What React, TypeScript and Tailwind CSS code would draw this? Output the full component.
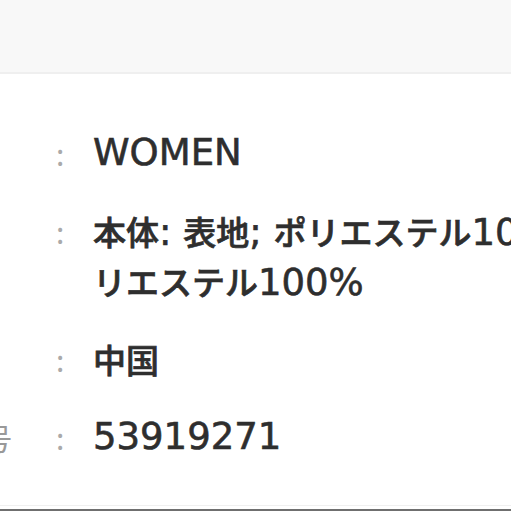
import React from 'react';

const rows: { label: string; lines: string[] }[] = [
  { label: '性別', lines: ['WOMEN'] },
  { label: '素材', lines: ['本体: 表地; ポリエステル100%, 裏地; ポ', 'リエステル100%'] },
  { label: '原産国', lines: ['中国'] },
  { label: '商品番号', lines: ['53919271'] },
];

// Latin text runs wider than the CJK glyphs in the original, so split them
const Mixed: React.FC<{ text: string }> = ({ text }) => {
  const parts = text.split(/([\u3000-\u30ff\u4e00-\u9fff\uff00-\uffef]+)/).filter(Boolean);
  return (
    <>
      {parts.map((p, i) =>
        /[\u3000-\u30ff\u4e00-\u9fff\uff00-\uffef]/.test(p) ? (
          <span key={i} className="text-[33px] font-['Noto_Sans_CJK_JP',sans-serif] font-medium [-webkit-text-stroke:0.7px]">
            {p}
          </span>
        ) : (
          <span key={i} className="text-[37px] font-['DejaVu_Sans','Noto_Sans_CJK_JP',sans-serif] [-webkit-text-stroke:0.6px]">
            {p}
          </span>
        )
      )}
    </>
  );
};

const App: React.FC = () => {
  return (
    <div className="w-[511px] h-[511px] overflow-hidden bg-white flex flex-col font-['Noto_Sans_CJK_JP',sans-serif]">
      <header className="h-[74px] shrink-0 bg-[#f8f8f8] border-b-2 border-[#efefef]" />

      <div className="flex-1 pt-[40px]">
        {rows.map((row) => (
          <div key={row.label} className="flex items-start py-[14px] ml-[-108px]">
            <span className="w-[164px] shrink-0 text-[30px] leading-[50px] text-[#999] whitespace-nowrap">
              {row.label}
            </span>
            <span className="w-[37px] shrink-0 text-[30px] leading-[50px] text-[#aaa]">:</span>
            <div className="leading-[50px] text-[#2e2e2e] whitespace-nowrap">
              {row.lines.map((line) => (
                <div key={line} className="h-[50px]">
                  <Mixed text={line} />
                </div>
              ))}
            </div>
          </div>
        ))}
      </div>

      <div className="shrink-0 h-[4px] border-t border-[#f0f0f0]" />
      <div className="shrink-0 h-[2px] bg-[#6f6f6f]" />
    </div>
  );
};

export default App;
